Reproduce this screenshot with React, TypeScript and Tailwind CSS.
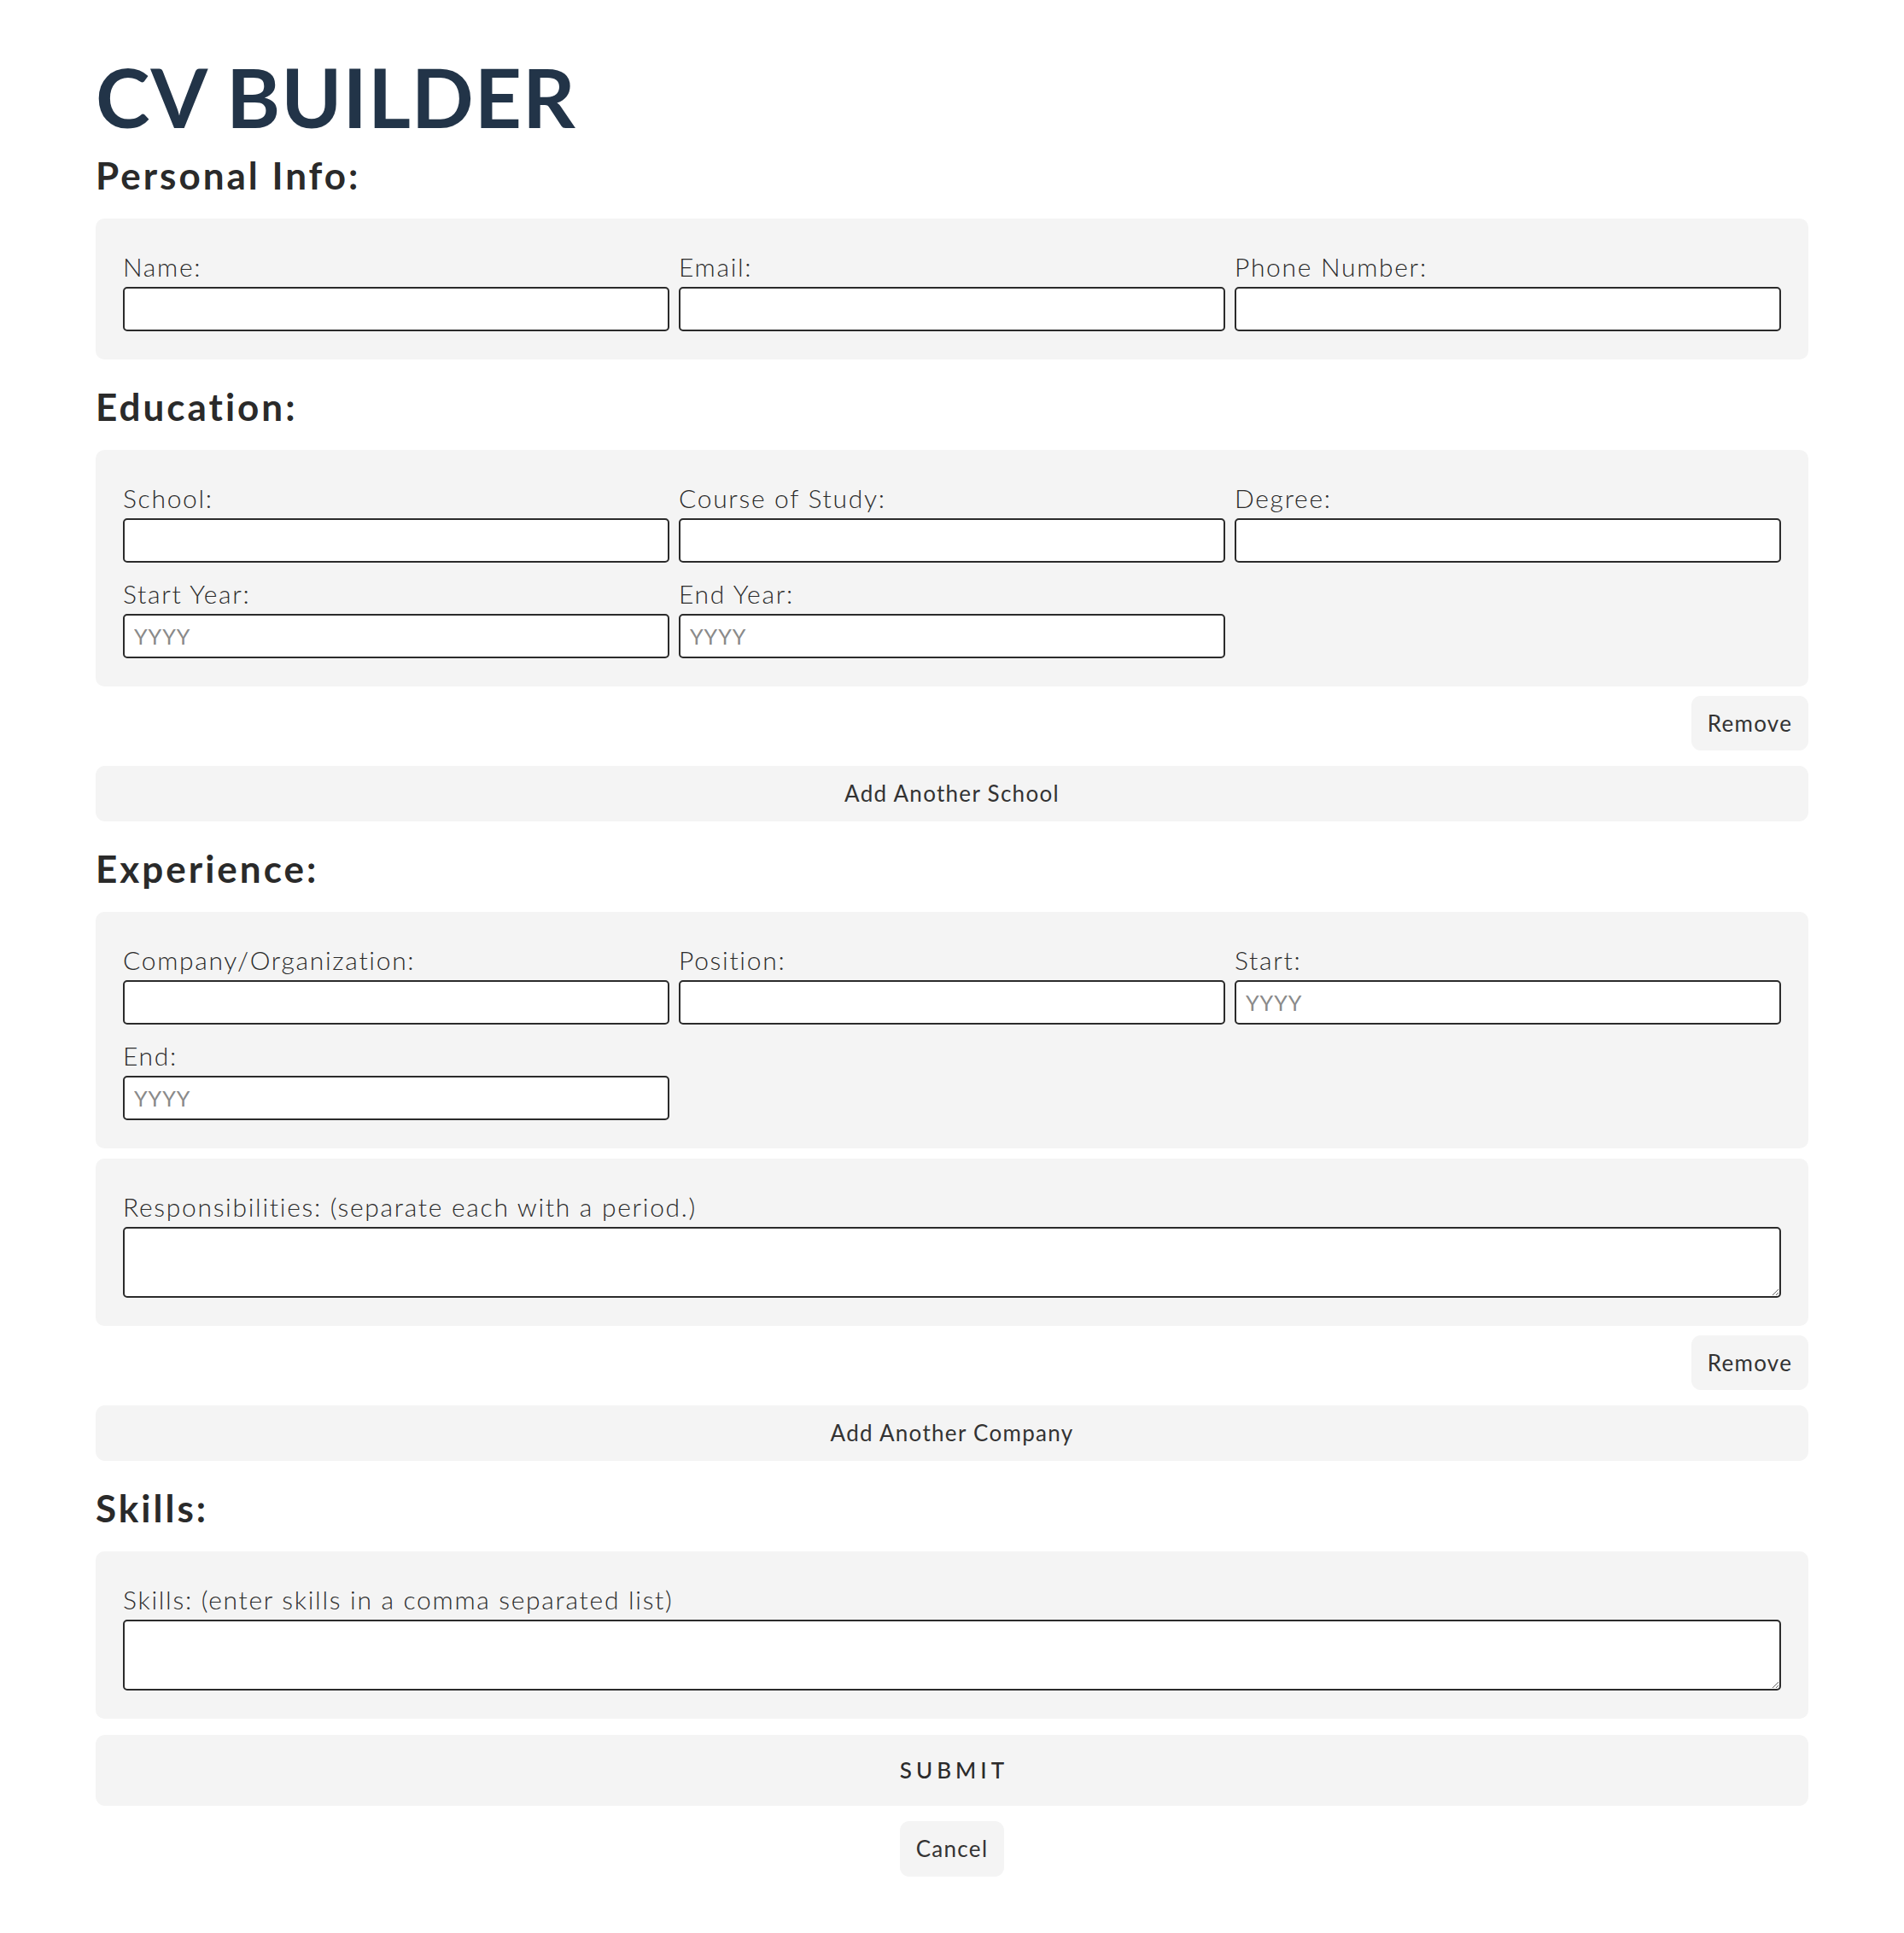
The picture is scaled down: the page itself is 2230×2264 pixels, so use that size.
import { useState } from "react";

const labelCls =
  "block text-[30px] font-light leading-[48px] text-[#2b2b2b] tracking-[1.7px] whitespace-nowrap";
const inputCls =
  "block h-[52px] w-full rounded-[5px] border-2 border-[#2b2b2b] bg-white px-[11px] text-[25px] text-[#333] tracking-[1px] outline-none placeholder:text-[#8a8a8a]";
const btnCls =
  "rounded-[11px] bg-[#f4f4f4] text-[26px] text-[#333333] tracking-[1.3px] hover:bg-[#ebebeb]";

function Field({ label, placeholder }: { label: string; placeholder?: string }) {
  return (
    <div>
      <label className={labelCls}>{label}</label>
      <input type="text" placeholder={placeholder} className={inputCls} />
    </div>
  );
}

function Heading({ children, first }: { children: React.ReactNode; first?: boolean }) {
  return (
    <h2
      className={`${first ? "mt-[9px]" : "mt-[29px]"} mb-[24px] text-[44px] font-bold leading-[53px] text-[#2a2a2a] tracking-[3px]`}
    >
      {children}
    </h2>
  );
}

function Panel({ children }: { children: React.ReactNode }) {
  return <div className="rounded-[10px] bg-[#f4f4f4] px-[32px] pt-[32px] pb-[33px]">{children}</div>;
}

function TextBox({ label }: { label: string }) {
  return (
    <Panel>
      <label className={labelCls}>{label}</label>
      <textarea className="block h-[83px] w-full rounded-[5px] border-2 border-[#2b2b2b] bg-white px-[11px] py-[6px] text-[25px] outline-none" />
    </Panel>
  );
}

export default function App() {
  const [schools, setSchools] = useState(1);
  const [jobs, setJobs] = useState(1);

  return (
    <div className="min-h-screen bg-white font-['Lato',sans-serif]">
      <div className="mx-auto w-[2006px] pt-[55px] pb-[60px]">
        <h1 className="text-[96px] font-bold leading-[115px] text-[#223448] tracking-[1px]">
          CV BUILDER
        </h1>

        {/* personal */}
        <Heading first>Personal Info:</Heading>
        <Panel>
          <div className="grid grid-cols-3 gap-x-[11px]">
            <Field label="Name:" />
            <Field label="Email:" />
            <Field label="Phone Number:" />
          </div>
        </Panel>

        {/* education */}
        <Heading>Education:</Heading>
        {Array.from({ length: schools }).map((_, i) => (
          <div key={i}>
            <Panel>
              <div className="grid grid-cols-3 gap-x-[11px] gap-y-[12px]">
                <Field label="School:" />
                <Field label="Course of Study:" />
                <Field label="Degree:" />
                <Field label="Start Year:" placeholder="YYYY" />
                <Field label="End Year:" placeholder="YYYY" />
              </div>
            </Panel>
            <div className="mt-[11px] flex justify-end">
              <button
                className={`${btnCls} h-[64px] w-[137px]`}
                onClick={() => setSchools((n) => Math.max(1, n - 1))}
              >
                Remove
              </button>
            </div>
          </div>
        ))}
        <button
          className={`${btnCls} mt-[18px] block h-[65px] w-full`}
          onClick={() => setSchools((n) => n + 1)}
        >
          Add Another School
        </button>

        {/* experience */}
        <Heading>Experience:</Heading>
        {Array.from({ length: jobs }).map((_, i) => (
          <div key={i}>
            <Panel>
              <div className="grid grid-cols-3 gap-x-[11px] gap-y-[12px]">
                <Field label="Company/Organization:" />
                <Field label="Position:" />
                <Field label="Start:" placeholder="YYYY" />
                <Field label="End:" placeholder="YYYY" />
              </div>
            </Panel>
            <div className="mt-[12px]">
              <TextBox label="Responsibilities: (separate each with a period.)" />
            </div>
            <div className="mt-[11px] flex justify-end">
              <button
                className={`${btnCls} h-[64px] w-[137px]`}
                onClick={() => setJobs((n) => Math.max(1, n - 1))}
              >
                Remove
              </button>
            </div>
          </div>
        ))}
        <button
          className={`${btnCls} mt-[18px] block h-[65px] w-full`}
          onClick={() => setJobs((n) => n + 1)}
        >
          Add Another Company
        </button>

        {/* skills */}
        <Heading>Skills:</Heading>
        <TextBox label="Skills: (enter skills in a comma separated list)" />

        <button className="mt-[19px] block h-[83px] w-full rounded-[11px] bg-[#f4f4f4] pl-[5px] text-[26px] font-medium tracking-[5px] text-[#2b2b2b]">
          SUBMIT
        </button>
        <div className="mt-[18px] flex justify-center">
          <button className={`${btnCls} h-[65px] w-[122px]`}>Cancel</button>
        </div>
      </div>
    </div>
  );
}
